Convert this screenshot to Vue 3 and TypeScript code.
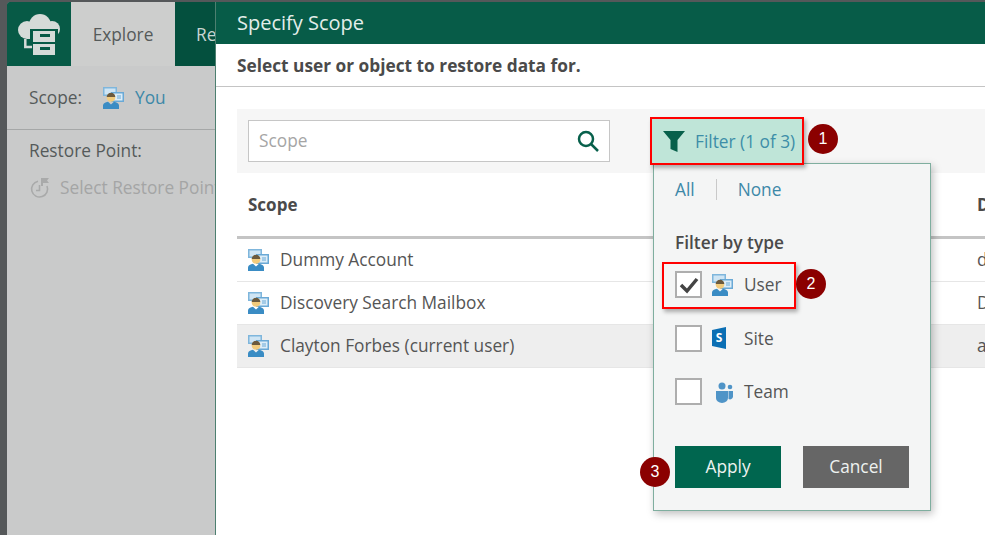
<script setup lang="ts">
const rows = [
  { name: 'Dummy Account', detail: 'd', selected: false },
  { name: 'Discovery Search Mailbox', detail: 'D', selected: false },
  { name: 'Clayton Forbes (current user)', detail: 'a', selected: true },
]
</script>

<template>
  <div class="screen">
    <div class="app">
      <nav class="nav">
        <div class="logo">
          <svg width="52" height="48" viewBox="0 0 52 48">
            <g fill="#d5dbd8">
              <circle cx="14" cy="20" r="9" />
              <circle cx="27" cy="15" r="11" />
              <circle cx="39" cy="19" r="8" />
              <path d="M14 14h25v15H14z" />
            </g>
            <path fill="#075a46" d="M17 19h28v28H17z" />
            <path fill="none" stroke="#d5dbd8" stroke-width="2.500" d="M12.300 29v8h6.700" />
            <path fill="#d5dbd8" fill-rule="evenodd" d="M20 21h22v11H20zM27 24v3h10v-3zM20 34h22v11H20zM27 37v3h10v-3z" />
          </svg>
        </div>
        <div class="tab active">Explore</div>
        <div class="tab">Re</div>
      </nav>
      <div class="scope-row">
        <span>Scope:</span>
        <svg class="user" viewBox="0 0 22 22"><use href="#user-icon" /></svg>
        <a class="link">You</a>
      </div>
      <div class="restore">
        <div>Restore Point:</div>
        <div class="select-point">
          <svg class="clock" width="22" height="22" viewBox="0 0 22 22" fill="none" stroke="#a9aaaa" stroke-width="1.600">
            <path d="M9 4.200A8 8 0 1 0 18 9" />
            <path d="M10.500 8v5.500H7" />
            <path fill="#a9aaaa" stroke="none" d="M12 1h8l-2 2.500 2 2.500h-6v3h-2z" />
          </svg>
          <span>Select Restore Point</span>
        </div>
      </div>
    </div>

    <section class="dialog">
      <header class="dialog-title">Specify Scope</header>
      <div class="dialog-sub">Select user or object to restore data for.</div>
      <div class="toolbar">
        <div class="search">
          <span>Scope</span>
          <svg width="24" height="24" viewBox="0 0 24 24" fill="none" stroke="#07604b" stroke-width="2.500">
            <circle cx="10" cy="10" r="7" />
            <path d="M15 15l7 7" />
          </svg>
        </div>
        <button class="filter">
          <svg width="22" height="23" viewBox="0 0 22 23"><path fill="#07604b" d="M0 1h22l-7.500 9v12l-7-3v-9z" /></svg>
          <span>Filter (1 of 3)</span>
        </button>
      </div>

      <div class="table">
        <div class="thead"><span>Scope</span><span>D</span></div>
        <div v-for="row in rows" :key="row.name" class="row" :class="{ selected: row.selected }">
          <span class="name">
            <svg class="user" viewBox="0 0 22 22"><use href="#user-icon" /></svg>
            {{ row.name }}
          </span>
          <span>{{ row.detail }}</span>
        </div>
      </div>
    </section>

    <div class="popover">
      <div class="quick"><a class="link">All</a><i></i><a class="link">None</a></div>
      <div class="by-type">Filter by type</div>
      <div class="options">
        <label class="option marked">
          <span class="box">
            <svg width="20" height="18" viewBox="0 0 20 18"><path fill="none" stroke="#444" stroke-width="3.500" d="M2 9l6 6L18 3" /></svg>
          </span>
          <svg class="user opt-icon" viewBox="0 0 22 22"><use href="#user-icon" /></svg>
          <span>User</span>
        </label>
        <label class="option">
          <span class="box"></span>
          <svg class="opt-icon" viewBox="0 0 22 22">
            <path fill="#0b6fb4" d="M1 3l14-3v22L1 19z" />
            <text x="8" y="15" text-anchor="middle" class="s">S</text>
          </svg>
          <span>Site</span>
        </label>
        <label class="option">
          <span class="box"></span>
          <svg class="opt-icon" viewBox="0 0 22 22">
            <circle cx="11" cy="5" r="3.500" fill="#4f94c7" />
            <circle cx="19" cy="6" r="2.300" fill="#4f94c7" />
            <path fill="#4f94c7" d="M17.500 10H22v5.500a3 3 0 0 1-4.500 2.500z" />
            <path fill="#4f94c7" d="M5 10h12v7a6 5 0 0 1-12 0z" />
          </svg>
          <span>Team</span>
        </label>
      </div>
      <div class="actions">
        <button class="btn apply">Apply</button>
        <button class="btn cancel">Cancel</button>
      </div>
    </div>

    <span class="badge b1">1</span>
    <span class="badge b2">2</span>
    <span class="badge b3">3</span>

    <svg width="0" height="0" class="defs">
      <defs>
        <symbol id="user-icon" viewBox="0 0 22 22">
          <path fill="#7fb6dc" d="M1 0h14v9H1z" />
          <path fill="#cfe5f4" d="M2.500 1.500h11v6h-11z" />
          <path fill="#6aa9d6" d="M9 5h13v10H9z" />
          <path fill="#dcedf8" d="M10.500 6.500h10v7h-10z" />
          <path fill="#6aa9d6" d="M15 8.500h4v1h-4zM15 10.500h4v1h-4z" />
          <circle cx="9" cy="10.500" r="4.300" fill="#f2cb7c" />
          <path fill="#6b5a3e" d="M4.700 10a4.300 4.300 0 0 1 8.600 0z" />
          <path fill="#3a8cc4" d="M1 22v-3.500c0-2 2.500-3.300 5-3.700l3 2.700 3-2.700c2.500.4 5 1.700 5 3.700V22z" />
        </symbol>
      </defs>
    </svg>
  </div>
</template>

<style>
html, body { margin: 0; background: #fff; }
</style>

<style scoped>
.screen {
  position: relative;
  width: 985px;
  height: 535px;
  overflow: hidden;
  box-sizing: border-box;
  padding: 2px 0 0 7px;
  background: #55585a;
  font-family: "Open Sans", "Liberation Sans", sans-serif;
  font-size: 17.300px;
  color: #555;
}
.defs { position: absolute; }
.user { width: 22px; height: 22px; flex: none; }
.link { color: #3d88a8; }

.app {
  width: 208px;
  height: 533px;
  background: #c9caca;
  color: #555a5a;
  border-top-left-radius: 4px;
  overflow: hidden;
}
.nav { display: flex; height: 64px; background: #04503e; }
.logo {
  width: 64px;
  flex: none;
  background: #075a46;
  display: flex;
  align-items: center;
  justify-content: center;
}
.tab {
  width: 104px;
  flex: none;
  display: flex;
  align-items: center;
  justify-content: center;
  color: #c9d5d1;
}
.tab.active { background: #cdcecd; color: #555a5a; }
.tab:not(.active) { justify-content: flex-start; padding-left: 21px; width: 16px; }
.scope-row {
  height: 63px;
  display: flex;
  align-items: center;
  padding-left: 22px;
  border-bottom: 1px solid #a5a7a7;
}
.scope-row .user { margin: 0 11px 0 20px; }
.restore { padding: 9px 0 0 22px; }
.select-point {
  display: flex;
  align-items: center;
  gap: 9px;
  margin-top: 14px;
  color: #a4a5a5;
  white-space: nowrap;
}
.clock { flex: none; }

.dialog {
  position: absolute;
  left: 215px;
  top: 2px;
  width: 770px;
  height: 533px;
  box-sizing: border-box;
  border-left: 1px solid #4d7f70;
  background: #fff;
  overflow: hidden;
}
.dialog-title {
  height: 42px;
  padding: 0 0 2px 21px;
  box-sizing: border-box;
  display: flex;
  align-items: center;
  background: #075c48;
  color: #e3eeea;
  font-size: 20px;
}
.dialog-sub {
  height: 43px;
  box-sizing: border-box;
  padding-left: 21px;
  display: flex;
  align-items: center;
  border-bottom: 1px solid #c4c4c4;
  font-size: 17.300px;
  font-weight: 700;
  color: #4a4a4a;
}
.toolbar {
  display: flex;
  align-items: center;
  height: 64px;
  margin: 22px 0 0 21px;
  padding-left: 11px;
  gap: 42px;
  background: #f6f6f6;
}
.search {
  width: 362px;
  height: 42px;
  box-sizing: border-box;
  display: flex;
  align-items: center;
  justify-content: space-between;
  padding: 0 9px 0 10px;
  background: #fff;
  border: 1px solid #c6c6c6;
  color: #a5a5a5;
}
.search span { margin-top: -1px; }
.filter {
  position: relative;
  z-index: 2;
  width: 154px;
  height: 48px;
  padding: 0 0 0 11px;
  margin-left: -2px;
  display: flex;
  align-items: center;
  gap: 10px;
  box-sizing: border-box;
  border: 2px solid #f00;
  background: #bfe5d8;
  box-shadow: 2px 3px 4px rgba(0, 0, 0, 0.3);
  color: #3d8ea8;
  font: inherit;
  white-space: nowrap;
}
.table { margin-left: 21px; }
.thead,
.row {
  display: grid;
  grid-template-columns: 729px 1fr;
  padding-left: 11px;
  white-space: nowrap;
  overflow: hidden;
}
.thead {
  height: 66px;
  align-items: center;
  border-bottom: 3px solid #c4c4c4;
  font-size: 17px;
  font-weight: 700;
  color: #4a4a4a;
  box-sizing: border-box;
}
.row {
  height: 43px;
  box-sizing: border-box;
  padding-bottom: 1px;
  align-items: center;
  border-bottom: 1px solid #e6e6e6;
}
.row.selected { background: #eeeeee; }
.name { display: flex; align-items: center; gap: 11px; margin-left: -1px; }

.popover {
  position: absolute;
  z-index: 1;
  left: 653px;
  top: 163px;
  width: 278px;
  height: 348px;
  box-sizing: border-box;
  padding: 12px 21px 0;
  background: #f4f5f5;
  border: 1px solid #7fae9f;
  box-shadow: 2px 3px 8px rgba(0, 0, 0, 0.25);
}
.quick { display: flex; align-items: center; gap: 21px; height: 26px; }
.quick i { width: 1px; height: 21px; background: #c9c9c9; }
.by-type { margin-top: 29px; font-size: 17.300px; font-weight: 600; color: #4a4a4a; line-height: 24px; }
.options { display: flex; flex-direction: column; margin-top: 3px; }
.option {
  display: flex;
  align-items: center;
  height: 53.500px;
  position: relative;
}
.marked::after {
  content: "";
  position: absolute;
  left: -13px;
  top: 4px;
  width: 134px;
  height: 47px;
  box-sizing: border-box;
  border: 2px solid #f00;
  box-shadow: 2px 3px 4px rgba(0, 0, 0, 0.3);
}
.box {
  width: 27px;
  height: 27px;
  box-sizing: border-box;
  display: flex;
  align-items: center;
  justify-content: center;
  background: #fff;
  border: 2px solid #aeaeae;
}
.opt-icon { width: 22px; height: 22px; margin: 0 11px 0 9px; flex: none; }
.s { fill: #fff; font-size: 12px; font-weight: 700; font-family: "Open Sans", sans-serif; }
.actions { display: flex; gap: 22px; margin-top: 27px; }
.btn {
  width: 106px;
  height: 42px;
  border: 0;
  padding: 0;
  color: #eef2f0;
  font: inherit;
}
.apply { background: #00664f; }
.cancel { background: #666; }

.badge {
  position: absolute;
  z-index: 3;
  width: 30px;
  height: 30px;
  border-radius: 50%;
  background: #8b0000;
  color: #fff;
  display: flex;
  align-items: center;
  justify-content: center;
  font-family: "Liberation Sans", sans-serif;
  font-size: 16px;
}
.b1 { left: 808px; top: 124px; }
.b2 { left: 796px; top: 269px; }
.b3 { left: 640px; top: 457px; }
</style>
